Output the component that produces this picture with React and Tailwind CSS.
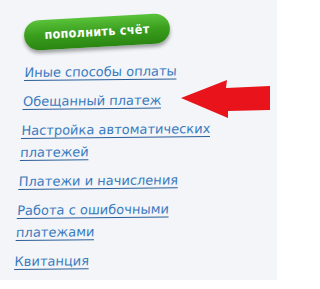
import React from 'react';

const links = [
    ['Иные способы оплаты'],
    ['Обещанный платеж'],
    ['Настройка автоматических', 'платежей'],
    ['Платежи и начисления'],
    ['Работа с ошибочными', 'платежами'],
    ['Квитанция'],
];

const App = () => {
    return (
        <div className="relative w-[277px] h-[289px] bg-white overflow-hidden font-['DejaVu_Sans',sans-serif]">
            <div className="h-[280px] bg-[#f3f5f8] pt-[17px]">
                {/* green button */}
                <div className="ml-[24px] w-[146px] h-[30px] rounded-full bg-gradient-to-b from-[#5ac23a] via-[#3a9e1d] to-[#2a8612] shadow-[0_3px_4px_rgba(0,0,0,0.35)] flex items-center justify-center [transform:rotate(-3.2deg)]">
                    <span className="text-white text-[12.5px] font-bold tracking-[0.3px] font-['DejaVu_Sans_Condensed','DejaVu_Sans',sans-serif]">
                        пополнить счёт
                    </span>
                </div>

                {/* links */}
                <ul className="mt-[15px] ml-[25px] flex flex-col gap-[7px] origin-top-left [transform:skewX(-3.6deg)_rotate(-0.6deg)]">
                    {links.map((lines, i) => (
                        <li key={i} className="text-[13px] leading-[22px] text-[#3a7bbf]">
                            {lines.map((l, j) => (
                                <div key={j}>
                                    <a href="#" className="underline decoration-[#2b5e98] underline-offset-[3px]">{l}</a>
                                </div>
                            ))}
                        </li>
                    ))}
                </ul>
            </div>

            {/* red arrow */}
            <svg className="absolute left-[178px] top-[76px]" width="96" height="46" viewBox="0 0 96 46">
                <polygon points="3,22 49,4 48,12 92,10 92,34 50,35 50,42" fill="#e8131b" />
            </svg>
        </div>
    );
};

export default App;
